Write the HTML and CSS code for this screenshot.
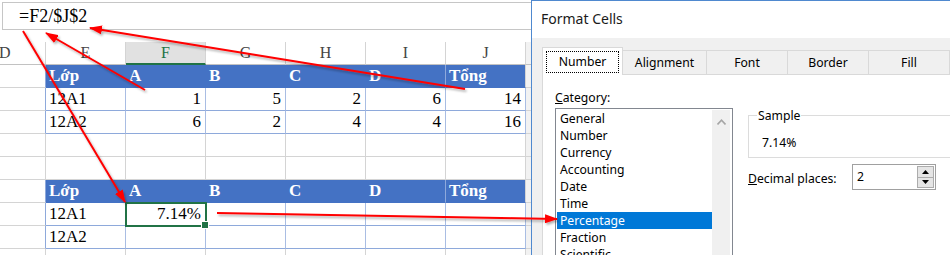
FILE: index.html
```html
<!DOCTYPE html>
<html lang="vi">
<head>
  <meta charset="UTF-8" />
  <meta name="viewport" content="width=device-width, initial-scale=1.0" />
  <title>Format Cells - Percentage</title>
  <link rel="stylesheet" href="styles.css">
</head>
<body>
  <div class="screen">
    <!-- Worksheet -->
    <section class="sheet">
      <div class="formula-bar">=F2/$J$2</div>
      <div class="grid">
        <!-- column letters -->
        <div class="head first">D</div>
        <div class="head">E</div>
        <div class="head selected">F</div>
        <div class="head">G</div>
        <div class="head">H</div>
        <div class="head">I</div>
        <div class="head">J</div>
        <div class="head tail"></div>

        <!-- table 1 -->
        <div class="edge"></div>
        <div class="blue">Lớp</div>
        <div class="blue">A</div>
        <div class="blue">B</div>
        <div class="blue">C</div>
        <div class="blue split">D</div>
        <div class="blue last">Tổng</div>
        <div class="tail"></div>

        <div class="edge"></div>
        <div class="td">12A1</div>
        <div class="td num">1</div>
        <div class="td num">5</div>
        <div class="td num">2</div>
        <div class="td num">6</div>
        <div class="td num">14</div>
        <div class="tail"></div>

        <div class="edge"></div>
        <div class="td">12A2</div>
        <div class="td num">6</div>
        <div class="td num">2</div>
        <div class="td num">4</div>
        <div class="td num">4</div>
        <div class="td num">16</div>
        <div class="tail"></div>

        <div></div><div></div><div></div><div></div><div></div><div></div><div></div><div class="tail"></div>
        <div></div><div></div><div></div><div></div><div></div><div></div><div></div><div class="tail"></div>

        <!-- table 2 -->
        <div class="edge"></div>
        <div class="blue">Lớp</div>
        <div class="blue">A</div>
        <div class="blue">B</div>
        <div class="blue">C</div>
        <div class="blue split">D</div>
        <div class="blue last">Tổng</div>
        <div class="tail"></div>

        <div class="edge"></div>
        <div class="td">12A1</div>
        <div class="td num active">7.14%</div>
        <div class="td"></div>
        <div class="td"></div>
        <div class="td"></div>
        <div class="td"></div>
        <div class="tail"></div>

        <div class="edge"></div>
        <div class="td">12A2</div>
        <div class="td"></div>
        <div class="td"></div>
        <div class="td"></div>
        <div class="td"></div>
        <div class="td"></div>
        <div class="tail"></div>

        <div></div><div></div><div></div><div></div><div></div><div></div><div></div><div class="tail"></div>
      </div>
    </section>

    <!-- Format Cells dialog -->
    <section class="dialog">
      <div class="dialog-title">Format Cells</div>
      <div class="tabs">
        <div class="tab current"><span class="focus">Number</span></div>
        <div class="tab wide">Alignment</div>
        <div class="tab">Font</div>
        <div class="tab">Border</div>
        <div class="tab">Fill</div>
      </div>
      <div class="panel">
        <div class="left-col">
          <div class="label"><u>C</u>ategory:</div>
          <div class="listbox">
            <ul class="items">
              <li>General</li>
              <li>Number</li>
              <li>Currency</li>
              <li>Accounting</li>
              <li>Date</li>
              <li>Time</li>
              <li class="picked">Percentage</li>
              <li>Fraction</li>
              <li>Scientific</li>
            </ul>
            <div class="scrollbar">
              <svg width="9" height="6" viewBox="0 0 9 6"><path d="M0.5 5.5 L4.5 1.2 L8.5 5.5" fill="none" stroke="#a6a6a6" stroke-width="1.6"/></svg>
            </div>
          </div>
        </div>
        <div class="right-col">
          <div class="group">
            <span class="group-label">Sample</span>
            <div class="sample">7.14%</div>
          </div>
          <div class="decimals">
            <span class="dec-label"><u>D</u>ecimal places:</span>
            <div class="spin">
              <span class="spin-value">2</span>
              <div class="spin-buttons">
                <div class="spin-btn"><svg width="7" height="4" viewBox="0 0 7 4"><path d="M0 4 L3.5 0 L7 4 Z" fill="#000"/></svg></div>
                <div class="spin-btn"><svg width="7" height="4" viewBox="0 0 7 4"><path d="M0 0 L3.5 4 L7 0 Z" fill="#000"/></svg></div>
              </div>
            </div>
          </div>
        </div>
      </div>
    </section>

    <!-- red callout arrows drawn over everything -->
    <svg class="arrows" width="950" height="255" viewBox="0 0 950 255">
      <defs>
        <marker id="head" viewBox="0 0 13 9" refX="12" refY="4.5" markerWidth="13" markerHeight="9" markerUnits="userSpaceOnUse" orient="auto">
          <path d="M0 0 L13 4.5 L0 9 Z" fill="#f00"/>
        </marker>
        <filter id="shade" x="-5%" y="-5%" width="110%" height="120%">
          <feDropShadow dx="1.5" dy="2" stdDeviation="1" flood-color="#000" flood-opacity="0.3"/>
        </filter>
      </defs>
      <g stroke="#f00" stroke-width="2" fill="none" marker-end="url(#head)" filter="url(#shade)">
        <line x1="465" y1="89" x2="90" y2="28"/>
        <line x1="145" y1="90" x2="46" y2="33"/>
        <line x1="23" y1="31" x2="125" y2="202"/>
        <line x1="217" y1="213" x2="557" y2="219"/>
      </g>
    </svg>
  </div>
</body>
</html>
```

FILE: styles.css
```css
* { box-sizing: border-box; }

body {
  margin: 0;
  background: #fff;
  overflow: hidden;
}

.screen {
  position: relative;
  display: flex;
  width: 950px;
  height: 255px;
  overflow: hidden;
}

/* worksheet */
.sheet {
  flex: none;
  width: 531px;
  padding-top: 2px;
  font-family: "Liberation Serif", "Times New Roman", serif;
  color: #000;
}
.formula-bar {
  margin-left: 2px;
  height: 28px;
  border: 1px solid #c6c6c6;
  border-right: none;
  padding-left: 16px;
  font-size: 18px;
  line-height: 26px;
}
.grid {
  display: grid;
  grid-template-columns: 46px repeat(6, 80px) 5px;
  grid-auto-rows: 23px;
  margin-top: 12px;
}
.grid > div {
  border-right: 1px solid #d4d4d4;
  border-bottom: 1px solid #d4d4d4;
  padding: 0 3px;
  font-size: 17px;
  line-height: 22px;
  white-space: nowrap;
  overflow: hidden;
}
.grid > .head {
  text-align: center;
  font-size: 16px;
  color: #444;
  border-bottom-color: #c2c2c2;
}
.grid > .head.first { text-align: left; padding: 0; text-indent: -1px; }
.grid > .head.selected {
  background: #e1e1e1;
  color: #217346;
  border-bottom: 2px solid #217346;
  line-height: 21px;
}
.grid > .tail {
  border-right: none;
  background: #f2f2f2;
}
.grid > .edge { border-right-color: #8ea9db; }
.grid > .blue {
  background: #4472c4;
  color: #fff;
  font-weight: bold;
  border-right-color: #4472c4;
  border-bottom-color: #4472c4;
}
.grid > .blue.split { border-right-color: #8ea9db; }
.grid > .blue.last { border-right-color: #d4d4d4; }
.grid > .td {
  border-right-color: #a9bde3;
  border-bottom-color: #8ea9db;
}
.grid > .num { text-align: right; padding-right: 4px; }
.grid > .active { position: relative; overflow: visible; }
.active::after {
  content: "";
  position: absolute;
  top: -1px; left: -1px; right: -2px; bottom: -2px;
  border: 2px solid #217346;
}
.active::before {
  content: "";
  position: absolute;
  right: -4px; bottom: -4px;
  width: 6px; height: 6px;
  background: #217346;
  border: 1px solid #fff;
  z-index: 1;
}

/* dialog */
.dialog {
  flex: none;
  width: 419px;
  background: #f0f0f0;
  border-left: 1px solid #4f89cf;
  border-top: 1px solid #4f89cf;
  font-family: "Noto Sans", "Open Sans", sans-serif;
  font-size: 12.2px;
  color: #000;
}
.dialog-title {
  height: 37px;
  background: #fff;
  padding-left: 9px;
  font-size: 14px;
  line-height: 36px;
  color: #1a1a1a;
}
.tabs {
  display: flex;
  align-items: flex-end;
  height: 36px;
  padding: 9px 0 0 10px;
}
.tab {
  flex: none;
  width: 81px;
  height: 24px;
  border: 1px solid #d9d9d9;
  border-left: none;
  border-bottom: none;
  text-align: center;
  line-height: 24px;
}
.tab.wide { width: 84px; }
.tab.current {
  position: relative;
  z-index: 1;
  height: 28px;
  margin-bottom: -1px;
  background: #fff;
  border-left: 1px solid #d9d9d9;
  padding: 3px 3px 0;
}
.focus {
  display: block;
  height: 22px;
  border: 1px dotted #000;
  line-height: 20px;
}
.panel {
  display: flex;
  height: 200px;
  margin-left: 10px;
  background: #fff;
  border-top: 1px solid #d9d9d9;
  border-left: 1px solid #d9d9d9;
  padding-left: 12px;
}
.left-col { padding-top: 14px; }
.label { line-height: 17px; margin-bottom: 2px; }
.listbox {
  display: flex;
  width: 178px;
  height: 160px;
  border: 1px solid #828790;
  padding: 1px 2px 0 1px;
}
.items {
  list-style: none;
  margin: 0;
  padding: 0;
  width: 155px;
}
.items li {
  height: 17px;
  line-height: 17px;
  padding-left: 3px;
}
.items li.picked { background: #0078d7; color: #fff; }
.scrollbar {
  width: 18px;
  background: #f0f0f0;
  display: flex;
  justify-content: center;
  padding-top: 9px;
}
.scrollbar svg { display: block; }

.right-col {
  margin-left: 15px;
  padding-top: 40px;
  flex: 1;
}
.group {
  height: 43px;
  border: 1px solid #dcdcdc;
  border-right: none;
  padding-left: 8px;
}
.group-label {
  display: table;
  margin-top: -9px;
  padding: 0 1px;
  background: #fff;
  line-height: 17px;
}
.sample {
  padding: 10px 0 0 5px;
  line-height: 17px;
}
.decimals {
  display: flex;
  align-items: center;
  margin-top: 6px;
}
.dec-label { width: 104px; padding-top: 2px; }
.spin {
  display: flex;
  width: 84px;
  height: 26px;
  border: 1px solid #a0a0a0;
  padding: 1px 1px 1px 4px;
}
.spin-value { flex: 1; line-height: 22px; }
.spin-buttons {
  display: flex;
  flex-direction: column;
  width: 17px;
}
.spin-btn {
  flex: 1;
  display: flex;
  align-items: center;
  justify-content: center;
  background: #e5e5e5;
  border: 1px solid #acacac;
}
.spin-btn + .spin-btn { border-top: none; }
.spin-btn svg { display: block; }

/* callouts */
.arrows {
  position: absolute;
  top: 0;
  left: 0;
  pointer-events: none;
}
```
